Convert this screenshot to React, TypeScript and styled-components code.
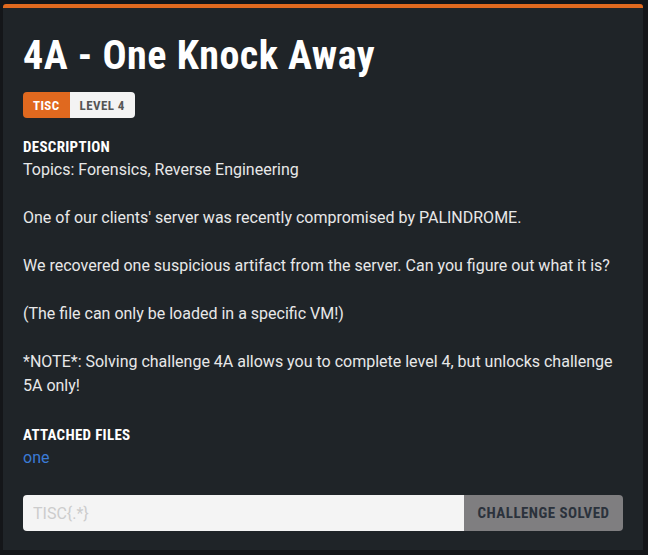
import React from "react";
import styled, { createGlobalStyle } from "styled-components";

const GlobalStyle = createGlobalStyle`
  html, body {
    margin: 0;
    padding: 0;
    background: #141619;
  }
  body {
    font-family: "Roboto", "Liberation Sans", sans-serif;
  }
  * { box-sizing: border-box; }
`;

const condensed = `
  font-family: "Roboto Condensed", "Roboto", "Liberation Sans", sans-serif;
  font-stretch: condensed;
  font-weight: 700;
`;

const Page = styled.div`
  width: 648px;
  height: 555px;
  padding: 4px 5px 5px 3px;
  background: #141619;
`;

const Card = styled.section`
  height: 546px;
  background: #1f2428;
  border-top: 4px solid #e0691f;
  border-radius: 3px 3px 0 0;
  padding: 24px 20px 19px 20px;
  display: flex;
  flex-direction: column;
  & > * {
    flex-shrink: 0;
  }
`;

const Title = styled.h1`
  ${condensed}
  margin: 0;
  font-size: 40px;
  line-height: 48px;
  letter-spacing: 0.5px;
  color: #ffffff;
`;

const Badges = styled.div`
  display: flex;
  margin-top: 12px;
  align-self: flex-start;
  border-radius: 4px;
  overflow: hidden;
`;

const Badge = styled.span<{ $accent?: boolean }>`
  ${condensed}
  height: 26px;
  display: flex;
  align-items: center;
  padding: 0 10px;
  font-size: 13px;
  letter-spacing: 0.4px;
  background: ${(p) => (p.$accent ? "#e0691f" : "#f3f3f3")};
  color: ${(p) => (p.$accent ? "#ffffff" : "#555555")};
`;

const SectionLabel = styled.h2<{ $gap: number }>`
  ${condensed}
  margin: ${(p) => p.$gap}px 0 0 0;
  font-size: 15px;
  line-height: 22px;
  letter-spacing: 0.3px;
  color: #ffffff;
  text-transform: uppercase;
`;

const Body = styled.div`
  font-size: 16px;
  line-height: 24px;
  color: #e8e8e8;
  white-space: pre-wrap;
`;

const FileLink = styled.a`
  font-size: 16px;
  line-height: 24px;
  color: #3b7bd6;
  text-decoration: none;
  align-self: flex-start;
`;

const FlagForm = styled.form`
  display: flex;
  height: 36px;
  margin-top: 25px;
  border-radius: 4px;
  overflow: hidden;
`;

const FlagInput = styled.input`
  flex: 1;
  min-width: 0;
  border: none;
  outline: none;
  background: #f4f4f4;
  padding: 0 10px;
  font-family: inherit;
  font-size: 16px;
  color: #333;
  &::placeholder {
    color: #cccccc;
  }
`;

const SolvedButton = styled.button`
  ${condensed}
  width: 159px;
  border: none;
  background: #7f7e80;
  color: #2b323c;
  font-size: 15px;
  letter-spacing: 0.45px;
  padding: 0;
`;

const description = `Topics: Forensics, Reverse Engineering

One of our clients' server was recently compromised by PALINDROME.

We recovered one suspicious artifact from the server. Can you figure out what it is?

(The file can only be loaded in a specific VM!)

*NOTE*: Solving challenge 4A allows you to complete level 4, but unlocks challenge 5A only!`;

export default function App() {
  return (
    <>
      <GlobalStyle />
      <Page>
        <Card>
          <Title>4A - One Knock Away</Title>
          <Badges>
            <Badge $accent>TISC</Badge>
            <Badge>LEVEL 4</Badge>
          </Badges>
          <SectionLabel $gap={18}>Description</SectionLabel>
          <Body>{description}</Body>
          <SectionLabel $gap={26}>Attached Files</SectionLabel>
          <FileLink href="#">one</FileLink>
          <FlagForm onSubmit={(e) => e.preventDefault()}>
            <FlagInput placeholder="TISC{.*}" />
            <SolvedButton type="button">CHALLENGE SOLVED</SolvedButton>
          </FlagForm>
        </Card>
      </Page>
    </>
  );
}
